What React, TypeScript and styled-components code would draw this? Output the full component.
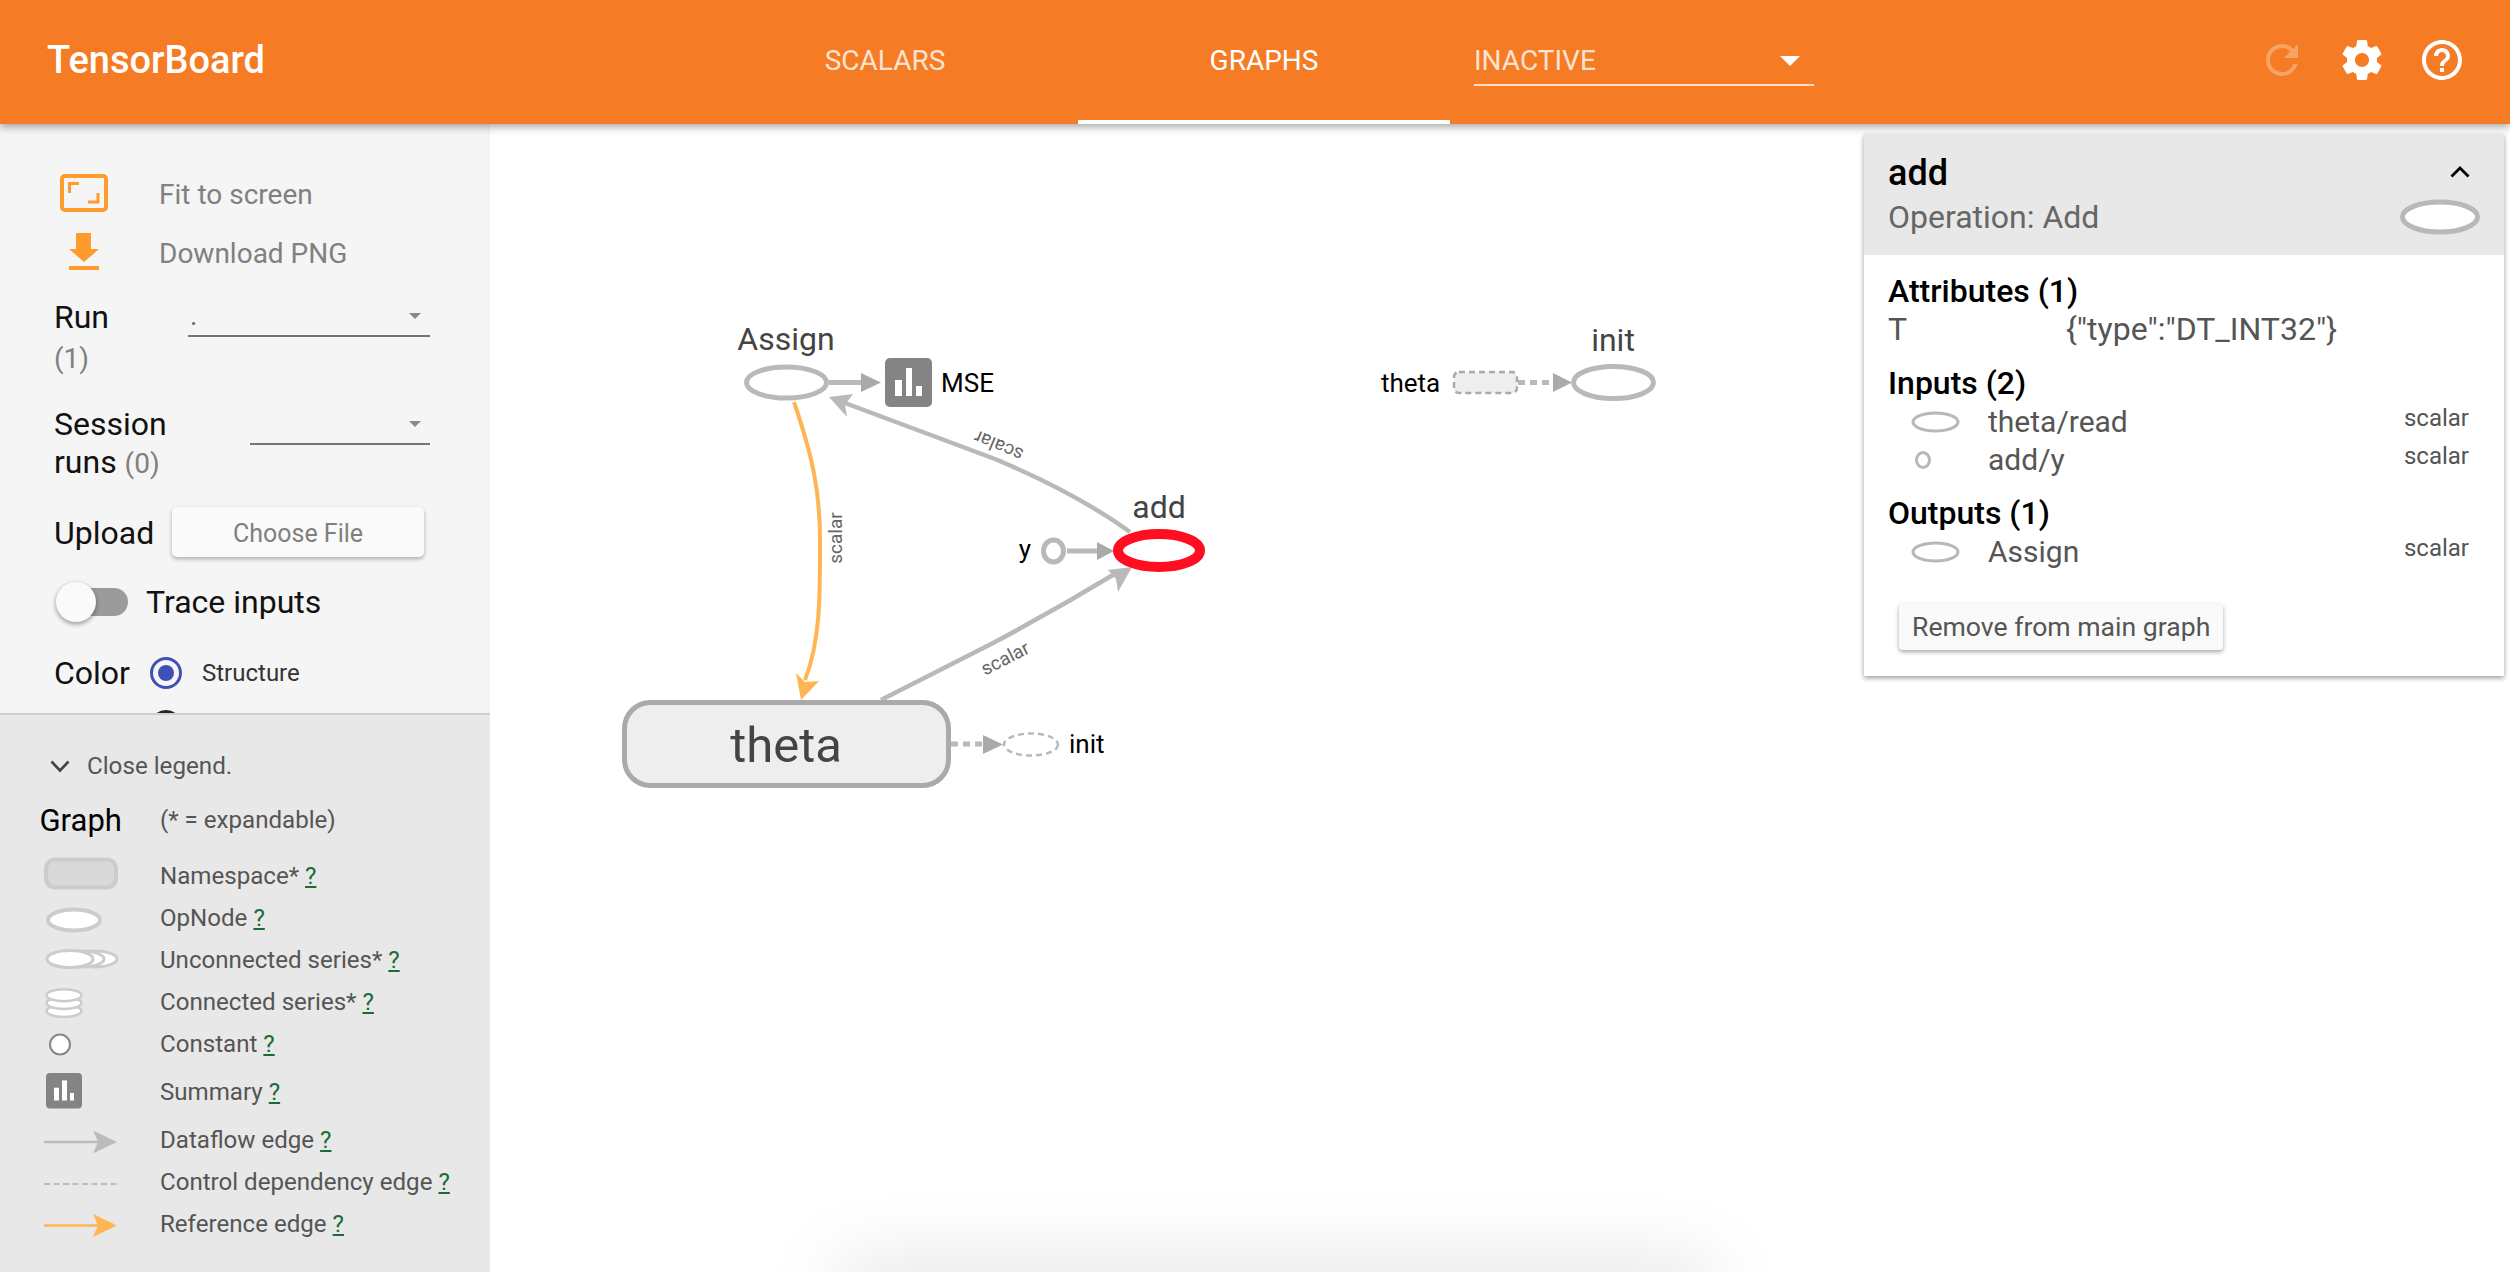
import React, { ReactElement } from 'react';
import styled, { createGlobalStyle } from 'styled-components';

const GlobalStyle = createGlobalStyle`
  html, body {
    margin: 0;
    height: 100%;
    overflow: hidden;
    background: #fff;
    font-family: Roboto, "Liberation Sans", sans-serif;
  }
`;

const Page = styled.div`
  display: flex;
  flex-direction: column;
  width: 2510px;
  height: 1272px;
  overflow: hidden;
`;

/* top bar */
const TopBar = styled.header`
  display: flex;
  flex: 0 0 124px;
  align-items: flex-start;
  background: #f57c24;
  color: #fff;
  box-shadow: 0 3px 8px rgba(0, 0, 0, 0.35);
  position: relative;
  z-index: 3;
`;

const Logo = styled.div`
  flex: 0 0 652px;
  padding-left: 47px;
  font-size: 38px;
  font-weight: 500;
  line-height: 121px;
`;

const Tab = styled.div<{ $active?: boolean }>`
  box-sizing: border-box;
  width: 372px;
  height: 124px;
  margin-right: 7px;
  text-align: center;
  font-size: 28px;
  line-height: 122px;
  color: ${(p) => (p.$active ? '#fff' : 'rgba(255, 255, 255, 0.8)')};
  border-bottom: 4px solid ${(p) => (p.$active ? '#fff' : 'transparent')};
`;

const TopSelect = styled.div`
  display: flex;
  align-items: center;
  justify-content: space-between;
  box-sizing: border-box;
  width: 340px;
  height: 46px;
  margin: 40px 0 0 17px;
  padding: 0 14px 2px 0;
  font-size: 28px;
  line-height: 40px;
  color: rgba(255, 255, 255, 0.8);
  border-bottom: 2px solid rgba(255, 255, 255, 0.75);
`;

const TopCaret = styled.span`
  border-left: 10px solid transparent;
  border-right: 10px solid transparent;
  border-top: 10px solid #fff;
`;

const TopIcons = styled.div`
  display: flex;
  gap: 32px;
  margin-left: auto;
  padding: 36px 44px 0 0;
`;

const TopIcon = styled.svg<{ $dim?: boolean }>`
  width: 48px;
  height: 48px;
  fill: #fff;
  opacity: ${(p) => (p.$dim ? 0.3 : 1)};
`;

/* main area */
const Main = styled.div`
  display: flex;
  flex: 1;
  min-height: 0;
`;

const Sidebar = styled.aside`
  display: flex;
  flex-direction: column;
  flex: 0 0 490px;
`;

const Controls = styled.div`
  box-sizing: border-box;
  flex: 0 0 591px;
  padding: 41px 60px 0 54px;
  overflow: hidden;
  background: #f5f5f5;
  border-bottom: 2px solid #cfcfcf;
`;

const ActionRow = styled.div`
  display: flex;
  align-items: center;
  height: 59px;
  margin-left: 1px;
  font-size: 28px;
  color: #808080;
`;

const ActionIcon = styled.div`
  display: flex;
  justify-content: center;
  width: 58px;
  margin-right: 46px;
  padding-bottom: 4px;
`;

const FieldRow = styled.div<{ $top: number }>`
  display: flex;
  align-items: flex-start;
  margin-top: ${(p) => p.$top}px;
`;

const FieldLabel = styled.div<{ $width: number; $lines?: number }>`
  flex: 0 0 ${(p) => p.$width}px;
  font-size: 32px;
  line-height: ${(p) => p.$lines ?? 40}px;
  color: #111;
`;

const Count = styled.span`
  font-size: 28px;
  color: #808080;
`;

const Select = styled.div`
  display: flex;
  flex: 1;
  align-items: center;
  justify-content: space-between;
  box-sizing: border-box;
  height: 40px;
  padding: 0 9px 0 2px;
  font-size: 28px;
  line-height: 40px;
  color: #666;
  border-bottom: 2px solid #757575;
`;

const SelectCaret = styled.span`
  border-left: 6px solid transparent;
  border-right: 6px solid transparent;
  border-top: 6px solid #8a8a8a;
`;

const UploadButton = styled.div`
  width: 252px;
  height: 50px;
  margin-top: -6px;
  text-align: center;
  font-size: 25px;
  line-height: 54px;
  color: #808080;
  background: #fafafa;
  border-radius: 5px;
  box-shadow: 0 2px 4px rgba(0, 0, 0, 0.3);
`;

const ToggleRow = styled.div`
  display: flex;
  align-items: center;
  height: 40px;
  margin-top: 25px;
  font-size: 32px;
  color: #111;
`;

const Toggle = styled.div`
  position: relative;
  flex: 0 0 68px;
  height: 28px;
  margin: 0 18px 0 6px;
  background: #9b9b9b;
  border-radius: 14px;
`;

const ToggleThumb = styled.span`
  position: absolute;
  left: -4px;
  top: -6px;
  width: 40px;
  height: 40px;
  background: #fafafa;
  border-radius: 50%;
  box-shadow: 0 2px 5px rgba(0, 0, 0, 0.4);
`;

const ColorRow = styled.div`
  display: flex;
  align-items: center;
  height: 40px;
  margin-top: 31px;
`;

const ColorLabel = styled.div`
  flex: 0 0 96px;
  font-size: 32px;
  color: #111;
`;

const Radio = styled.span<{ $checked?: boolean }>`
  display: flex;
  align-items: center;
  justify-content: center;
  box-sizing: border-box;
  width: 32px;
  height: 32px;
  border: 3px solid ${(p) => (p.$checked ? '#3f51b5' : '#222')};
  border-radius: 50%;

  &::after {
    content: '';
    width: 16px;
    height: 16px;
    border-radius: 50%;
    background: ${(p) => (p.$checked ? '#3f51b5' : 'transparent')};
  }
`;

const RadioText = styled.span`
  margin-left: 20px;
  font-size: 24px;
  color: #333;
`;

const NextRadio = styled.div`
  margin: 17px 0 0 96px;
`;

/* legend */
const Legend = styled.div`
  flex: 1;
  padding: 34px 0 0 41px;
  background: #e8e8e8;
  color: #555;
  font-size: 24.1px;
`;

const CloseRow = styled.div`
  display: flex;
  align-items: center;
  height: 34px;
  padding-left: 9px;
  font-size: 24.2px;
`;

const CloseChevron = styled.svg`
  width: 20px;
  height: 13px;
  margin-right: 17px;
`;

const GraphRow = styled.div`
  display: flex;
  align-items: center;
  height: 40px;
  margin: 17px 0 15px -1.5px;
`;

const GraphTitle = styled.div`
  flex: 0 0 120.5px;
  font-size: 31px;
  color: #000;
`;

const LegendRow = styled.div<{ $height?: number }>`
  display: flex;
  align-items: center;
  height: ${(p) => p.$height ?? 42}px;
`;

const LegendIcon = styled.svg`
  flex: 0 0 120px;
  margin-right: -1px;
`;

const Help = styled.span`
  margin-left: 6px;
  color: #1a6b34;
  text-decoration: underline;
`;

/* graph canvas */
const Canvas = styled.main`
  position: relative;
  flex: 1;
  overflow: hidden;
  background: #fff;
`;

const GraphSvg = styled.svg`
  position: absolute;
  left: 0;
  top: 0;
`;

const NodeText = styled.text<{ $size: number; $dark?: boolean }>`
  font-size: ${(p) => p.$size}px;
  fill: ${(p) => (p.$dark ? '#000' : '#444')};
`;

const EdgeLabel = styled.text`
  font-size: 19px;
  fill: #666;
  text-anchor: middle;
`;

const FoldShadow = styled.div`
  position: absolute;
  left: 350px;
  right: 800px;
  top: 1148px;
  height: 40px;
  background: #e8e8e8;
  box-shadow: 0 0 80px rgba(0, 0, 0, 0.17);
`;

/* node info card */
const InfoCard = styled.section`
  position: absolute;
  left: 1374px;
  top: 10px;
  width: 640px;
  height: 542px;
  background: #fff;
  box-shadow: 0 2px 5px rgba(0, 0, 0, 0.4);
`;

const InfoHeader = styled.div`
  box-sizing: border-box;
  height: 121px;
  padding: 15px 24px 0 24px;
  background: #e8e8e8;
`;

const InfoTitleRow = styled.div`
  display: flex;
  align-items: center;
  justify-content: space-between;
  height: 47px;
  font-size: 36px;
  font-weight: 500;
  color: #000;
`;

const InfoSubRow = styled.div`
  display: flex;
  align-items: center;
  justify-content: space-between;
  height: 42px;
  font-size: 32px;
  color: #666;
`;

const UpChevron = styled.svg`
  width: 20px;
  height: 12px;
  margin: -2px 10px 0 0;
`;

const InfoBody = styled.div`
  padding: 16px 35px 0 24px;
`;

const SectionTitle = styled.div<{ $top?: number }>`
  margin-top: ${(p) => p.$top ?? 0}px;
  font-size: 32px;
  font-weight: 500;
  line-height: 40px;
  color: #000;
`;

const AttrRow = styled.div`
  display: flex;
  padding-top: 3px;
  font-size: 32px;
  line-height: 30px;
  color: #555;
`;

const AttrKey = styled.div`
  flex: 0 0 178px;
`;

const PortRow = styled.div`
  display: flex;
  align-items: center;
  box-sizing: border-box;
  height: 38px;
  padding-bottom: 2px;
  font-size: 30px;
  color: #555;
`;

const PortIcon = styled.svg`
  flex: 0 0 100px;
  margin-top: 2px;
`;

const PortType = styled.div`
  align-self: flex-start;
  margin-left: auto;
  font-size: 24px;
  line-height: 30px;
`;

const RemoveButton = styled.div`
  display: inline-block;
  box-sizing: border-box;
  height: 46px;
  margin: 33px 0 0 11px;
  padding: 0 13px;
  font-size: 26.6px;
  line-height: 46px;
  color: #555;
  background: #fafafa;
  border-radius: 4px;
  box-shadow: 0 2px 4px rgba(0, 0, 0, 0.35);
`;

const REFRESH =
  'M17.65 6.35C16.2 4.9 14.21 4 12 4c-4.42 0-7.99 3.58-7.99 8s3.57 8 7.99 8c3.73 0 6.84-2.55 7.73-6h-2.08c-.82 2.33-3.04 4-5.65 4-3.31 0-6-2.69-6-6s2.69-6 6-6c1.66 0 3.14.69 4.22 1.78L13 11h7V4l-2.35 2.35z';
const SETTINGS =
  'M19.43 12.98c.04-.32.07-.64.07-.98s-.03-.66-.07-.98l2.11-1.65c.19-.15.24-.42.12-.64l-2-3.46c-.12-.22-.39-.3-.61-.22l-2.49 1c-.52-.4-1.08-.73-1.69-.98l-.38-2.65C14.46 2.18 14.25 2 14 2h-4c-.25 0-.46.18-.49.42l-.38 2.65c-.61.25-1.17.59-1.69.98l-2.49-1c-.23-.09-.49 0-.61.22l-2 3.46c-.13.22-.07.49.12.64l2.11 1.65c-.04.32-.07.65-.07.98s.03.66.07.98l-2.11 1.65c-.19.15-.24.42-.12.64l2 3.46c.12.22.39.3.61.22l2.49-1c.52.4 1.08.73 1.69.98l.38 2.65c.03.24.24.42.49.42h4c.25 0 .46-.18.49-.42l.38-2.65c.61-.25 1.17-.59 1.69-.98l2.49 1c.23.09.49 0 .61-.22l2-3.46c.12-.22.07-.49-.12-.64l-2.11-1.65zM12 15.5c-1.93 0-3.5-1.57-3.5-3.5s1.57-3.5 3.5-3.5 3.5 1.57 3.5 3.5-1.57 3.5-3.5 3.5z';
const HELP =
  'M11 18h2v-2h-2v2zm1-16C6.48 2 2 6.48 2 12s4.48 10 10 10 10-4.48 10-10S17.52 2 12 2zm0 18c-4.41 0-8-3.59-8-8s3.59-8 8-8 8 3.59 8 8-3.59 8-8 8zm0-14c-2.21 0-4 1.79-4 4h2c0-1.1.9-2 2-2s2 .9 2 2c0 2-3 1.75-3 5h2c0-2.25 3-2.5 3-5 0-2.21-1.79-4-4-4z';

function Ring({ small }: { small?: boolean }): ReactElement {
  return (
    <PortIcon width="100" height="22" viewBox="0 0 100 22">
      {small ? (
        <ellipse cx="35" cy="11" rx="6.5" ry="7.5" fill="#fff" stroke="#b8b8b8" strokeWidth="3" />
      ) : (
        <ellipse cx="47.5" cy="11" rx="22.5" ry="9" fill="#fff" stroke="#b8b8b8" strokeWidth="3" />
      )}
    </PortIcon>
  );
}

function GraphDrawing(): ReactElement {
  const grey = '#b9b9b9';
  const head = '#aaa';
  const orange = '#ffb553';
  return (
    <GraphSvg width="2020" height="1148" viewBox="490 124 2020 1148">
      {/* edges */}
      <path d="M829 382.5H863" stroke={grey} strokeWidth="5" fill="none" />
      <polygon points="861,373 881,382.5 861,392" fill={head} />
      <path d="M1130 532C1086 500 1040 478 995 459L845 403" stroke={grey} strokeWidth="4.5" fill="none" />
      <polygon points="829,397 853,394 845,405 847,417" fill={grey} />
      <path d="M794 402C812 455 820 490 820 540C820 590 821 640 805 680" stroke={orange} strokeWidth="4" fill="none" />
      <polygon points="801,700 796,673 805,682 819,681" fill={orange} />
      <path d="M881 700L995 642C1040 618 1080 595 1118 572" stroke={grey} strokeWidth="4.5" fill="none" />
      <polygon points="1132,567 1118,592 1116,579 1108,570" fill={grey} />
      <path d="M1067 551H1100" stroke={grey} strokeWidth="5" fill="none" />
      <polygon points="1097,542 1114,551 1097,560" fill={head} />
      <path d="M951 744H985" stroke={grey} strokeWidth="5" strokeDasharray="7 5" fill="none" />
      <polygon points="983,735 1003,744.5 983,754" fill={head} />
      <path d="M1518 382.5H1555" stroke={grey} strokeWidth="5" strokeDasharray="7 5" fill="none" />
      <polygon points="1553,373 1572,382.5 1553,392" fill={head} />

      <EdgeLabel transform="translate(1001 440) rotate(203)">scalar</EdgeLabel>
      <EdgeLabel transform="translate(842 538) rotate(-90)">scalar</EdgeLabel>
      <EdgeLabel transform="translate(1008 664) rotate(-27)">scalar</EdgeLabel>

      {/* nodes */}
      <ellipse cx="786.5" cy="382.5" rx="40" ry="15.5" fill="#fff" stroke={grey} strokeWidth="5" />
      <NodeText $size={32} x="786" y="350" textAnchor="middle">Assign</NodeText>
      <rect x="885" y="358" width="47" height="49" rx="5" fill="#848484" />
      <rect x="895" y="380" width="7" height="16" fill="#fff" />
      <rect x="906" y="368" width="6" height="28" fill="#fff" />
      <rect x="916" y="386" width="6" height="10" fill="#fff" />
      <NodeText $size={26} $dark x="941" y="392">MSE</NodeText>

      <ellipse cx="1053.5" cy="551" rx="10" ry="11" fill="#fff" stroke={grey} strokeWidth="5" />
      <NodeText $size={26} $dark x="1025" y="558" textAnchor="middle">y</NodeText>
      <ellipse cx="1159" cy="550.5" rx="41" ry="16.5" fill="#fff" stroke="#ff0d20" strokeWidth="10" />
      <NodeText $size={32} x="1159" y="518" textAnchor="middle">add</NodeText>

      <rect x="624.5" y="702.5" width="324" height="83" rx="26" fill="#eee" stroke={head} strokeWidth="5" />
      <NodeText $size={49} x="786" y="762" textAnchor="middle">theta</NodeText>
      <ellipse cx="1031" cy="744.5" rx="27" ry="11" fill="#fff" stroke={grey} strokeWidth="2.5" strokeDasharray="6 4" />
      <NodeText $size={26} $dark x="1069" y="753">init</NodeText>

      <NodeText $size={26} $dark x="1381" y="392">theta</NodeText>
      <rect x="1454" y="372" width="63" height="21" rx="5" fill="#eee" stroke={head} strokeWidth="2.5" strokeDasharray="6 4" />
      <ellipse cx="1613.5" cy="382.5" rx="40" ry="16" fill="#fff" stroke={grey} strokeWidth="5" />
      <NodeText $size={32} x="1613" y="350.5" textAnchor="middle">init</NodeText>
    </GraphSvg>
  );
}

function App(): ReactElement {
  return (
    <Page>
      <GlobalStyle />
      <TopBar>
        <Logo>TensorBoard</Logo>
        <Tab>SCALARS</Tab>
        <Tab $active>GRAPHS</Tab>
        <TopSelect>
          INACTIVE
          <TopCaret />
        </TopSelect>
        <TopIcons>
          <TopIcon $dim viewBox="0 0 24 24"><path d={REFRESH} /></TopIcon>
          <TopIcon viewBox="0 0 24 24"><path d={SETTINGS} /></TopIcon>
          <TopIcon viewBox="0 0 24 24"><path d={HELP} /></TopIcon>
        </TopIcons>
      </TopBar>

      <Main>
        <Sidebar>
          <Controls>
            <ActionRow>
              <ActionIcon>
                <svg width="48" height="38" viewBox="0 0 48 38" fill="none" stroke="#ff9a2c">
                  <rect x="2" y="2" width="44" height="34" rx="3" strokeWidth="4" />
                  <path d="M9.5 19V9.5H19M38 19V28H28" strokeWidth="3" />
                </svg>
              </ActionIcon>
              Fit to screen
            </ActionRow>
            <ActionRow>
              <ActionIcon>
                <svg width="30" height="37" viewBox="0 0 30 37" fill="#ff9a2c">
                  <polygon points="7,0 22,0 22,16 30,16 15,29 0,16 7,16" />
                  <rect x="0" y="33" width="30" height="4" />
                </svg>
              </ActionIcon>
              Download PNG
            </ActionRow>

            <FieldRow $top={13.5}>
              <FieldLabel $width={134}>
                Run
                <br />
                <Count>(1)</Count>
              </FieldLabel>
              <Select>
                .
                <SelectCaret />
              </Select>
            </FieldRow>
            <FieldRow $top={26}>
              <FieldLabel $width={196} $lines={38.5}>
                Session
                <br />
                runs <Count>(0)</Count>
              </FieldLabel>
              <Select>
                <span />
                <SelectCaret />
              </Select>
            </FieldRow>
            <FieldRow $top={29.5}>
              <FieldLabel $width={118}>Upload</FieldLabel>
              <UploadButton>Choose File</UploadButton>
            </FieldRow>
            <ToggleRow>
              <Toggle>
                <ToggleThumb />
              </Toggle>
              Trace inputs
            </ToggleRow>
            <ColorRow>
              <ColorLabel>Color</ColorLabel>
              <Radio $checked />
              <RadioText>Structure</RadioText>
            </ColorRow>
            <NextRadio>
              <Radio />
            </NextRadio>
          </Controls>

          <Legend>
            <CloseRow>
              <CloseChevron viewBox="0 0 20 13" fill="none" stroke="#444" strokeWidth="2.6">
                <path d="M1.5 1.5L10 10.5L18.5 1.5" />
              </CloseChevron>
              Close legend.
            </CloseRow>
            <GraphRow>
              <GraphTitle>Graph</GraphTitle>
              (* = expandable)
            </GraphRow>

            <LegendRow>
              <LegendIcon width="120" height="42" viewBox="0 0 120 42">
                <rect x="5" y="4.5" width="70" height="28" rx="9" fill="#d9d9d9" stroke="#ccc" strokeWidth="4" />
              </LegendIcon>
              Namespace*<Help>?</Help>
            </LegendRow>
            <LegendRow>
              <LegendIcon width="120" height="42" viewBox="0 0 120 42">
                <ellipse cx="33" cy="23" rx="26" ry="10.5" fill="#fff" stroke="#ccc" strokeWidth="4" />
              </LegendIcon>
              OpNode<Help>?</Help>
            </LegendRow>
            <LegendRow>
              <LegendIcon width="120" height="42" viewBox="0 0 120 42" fill="#fff" stroke="#ccc" strokeWidth="3">
                <ellipse cx="54" cy="20" rx="22" ry="8" />
                <ellipse cx="41" cy="20" rx="22" ry="8" />
                <ellipse cx="29" cy="20" rx="23" ry="8.5" />
              </LegendIcon>
              Unconnected series*<Help>?</Help>
            </LegendRow>
            <LegendRow>
              <LegendIcon width="120" height="42" viewBox="0 0 120 42" fill="#fff" stroke="#ccc" strokeWidth="2.5">
                <ellipse cx="23" cy="30" rx="17.5" ry="6" />
                <ellipse cx="23" cy="22" rx="17.5" ry="6" />
                <ellipse cx="23" cy="14.3" rx="17.5" ry="6" />
              </LegendIcon>
              Connected series*<Help>?</Help>
            </LegendRow>
            <LegendRow>
              <LegendIcon width="120" height="42" viewBox="0 0 120 42">
                <circle cx="19" cy="21.5" r="10" fill="#fff" stroke="#888" strokeWidth="2" />
              </LegendIcon>
              Constant<Help>?</Help>
            </LegendRow>
            <LegendRow $height={54}>
              <LegendIcon width="120" height="54" viewBox="0 0 120 54">
                <rect x="5" y="8" width="36" height="35.5" rx="4" fill="#848484" />
                <rect x="13" y="22.7" width="5" height="12.8" fill="#fff" />
                <rect x="21" y="15.4" width="5" height="20.1" fill="#fff" />
                <rect x="29" y="28" width="4" height="7.5" fill="#fff" />
              </LegendIcon>
              Summary<Help>?</Help>
            </LegendRow>
            <LegendRow>
              <LegendIcon width="120" height="42" viewBox="0 0 120 42">
                <path d="M3 23H58" stroke="#bbb" strokeWidth="2.5" />
                <polygon points="52,11.5 76,23 52,34.5 57,23" fill="#bbb" />
              </LegendIcon>
              Dataflow edge<Help>?</Help>
            </LegendRow>
            <LegendRow>
              <LegendIcon width="120" height="42" viewBox="0 0 120 42">
                <path d="M3 23H76" stroke="#bbb" strokeWidth="2" strokeDasharray="6 3.5" />
              </LegendIcon>
              Control dependency edge<Help>?</Help>
            </LegendRow>
            <LegendRow>
              <LegendIcon width="120" height="42" viewBox="0 0 120 42">
                <path d="M3 22.5H58" stroke="#ffb553" strokeWidth="2.5" />
                <polygon points="52,11 76,22.5 52,34 57,22.5" fill="#ffb553" />
              </LegendIcon>
              Reference edge<Help>?</Help>
            </LegendRow>
          </Legend>
        </Sidebar>

        <Canvas>
          <GraphDrawing />
          <FoldShadow />
          <InfoCard>
            <InfoHeader>
              <InfoTitleRow>
                add
                <UpChevron viewBox="0 0 20 12" fill="none" stroke="#000" strokeWidth="2.8">
                  <path d="M1.5 10.5L10 2L18.5 10.5" />
                </UpChevron>
              </InfoTitleRow>
              <InfoSubRow>
                Operation: Add
                <svg width="80" height="36" viewBox="0 0 80 36">
                  <ellipse cx="40" cy="18" rx="37.5" ry="15" fill="#fff" stroke="#b8b8b8" strokeWidth="5" />
                </svg>
              </InfoSubRow>
            </InfoHeader>
            <InfoBody>
              <SectionTitle>Attributes (1)</SectionTitle>
              <AttrRow>
                <AttrKey>T</AttrKey>
                {'{"type":"DT_INT32"}'}
              </AttrRow>
              <SectionTitle $top={19}>Inputs (2)</SectionTitle>
              <PortRow>
                <Ring />
                theta/read
                <PortType>scalar</PortType>
              </PortRow>
              <PortRow>
                <Ring small />
                add/y
                <PortType>scalar</PortType>
              </PortRow>
              <SectionTitle $top={14}>Outputs (1)</SectionTitle>
              <PortRow>
                <Ring />
                Assign
                <PortType>scalar</PortType>
              </PortRow>
              <RemoveButton>Remove from main graph</RemoveButton>
            </InfoBody>
          </InfoCard>
        </Canvas>
      </Main>
    </Page>
  );
}

export default App;
